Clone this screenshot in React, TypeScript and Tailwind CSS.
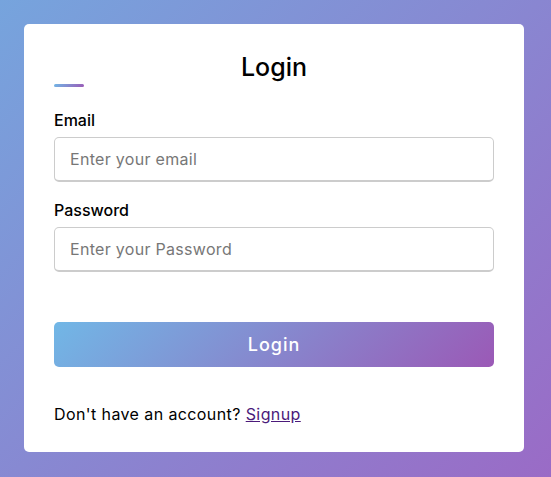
export default function App() {
  return (
    <div
      className="min-h-screen w-full flex items-start justify-start px-6 pt-6 bg-[linear-gradient(135deg,#76a4dd,#9a6bc6)]"
      style={{ fontFamily: 'Inter, "Noto Sans", sans-serif' }}
    >
      <div className="w-[500px] bg-white rounded-[5px] px-[30px] pt-[25px] pb-[26px]">
        <h1 className="text-[25px] font-medium text-center leading-[37.5px] -mb-[3px] text-black">Login</h1>
        <div className="h-[3px] w-[30px] rounded-sm bg-[linear-gradient(135deg,#71b7e6,#9b59b6)]" />

        <form className="mt-[21.5px]" onSubmit={(e) => e.preventDefault()}>
          <label className="block text-base font-medium leading-6 text-black mb-[5px]">Email</label>
          <input
            type="text"
            placeholder="Enter your email"
            className="w-full h-[45px] px-[15px] text-base tracking-[0.3px] rounded-[5px] border border-[#ccc] border-b-2 outline-none placeholder:text-[#777]"
          />

          <label className="block text-base font-medium leading-6 text-black mt-[16px] mb-[5px]">Password</label>
          <input
            type="password"
            placeholder="Enter your Password"
            className="w-full h-[45px] px-[15px] text-base tracking-[0.3px] rounded-[5px] border border-[#ccc] border-b-2 outline-none placeholder:text-[#777]"
          />

          <button
            type="submit"
            className="mt-[50px] w-full h-[45px] rounded-[5px] text-white text-lg font-medium tracking-[1px] bg-[linear-gradient(135deg,#71b7e6,#9b59b6)]"
          >
            Login
          </button>
        </form>

        <p className="mt-[35px] text-base leading-6 tracking-[0.4px] text-black">
          Don't have an account?{' '}
          <a href="#" className="text-[#4b1a7a] underline">Signup</a>
        </p>
      </div>
    </div>
  );
}
